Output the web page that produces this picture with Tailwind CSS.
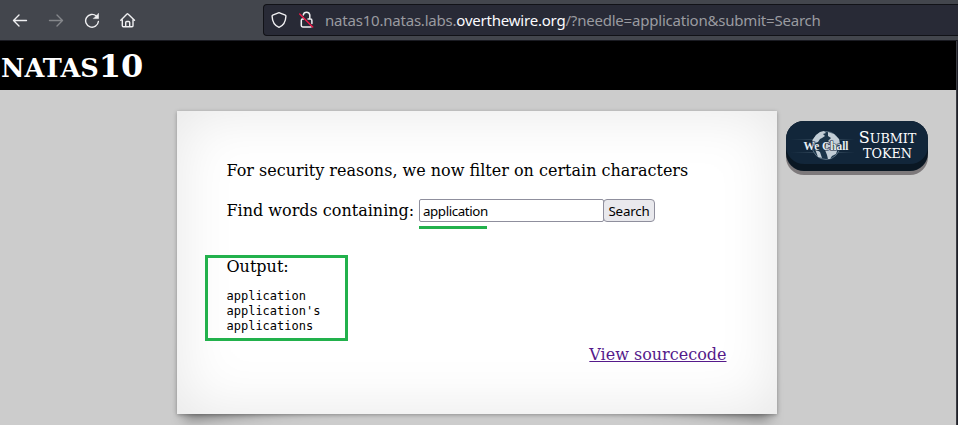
<!DOCTYPE html>
<html lang="en">
<head>
<meta charset="utf-8">
<title>natas10</title>
<script src="https://cdn.jsdelivr.net/npm/@tailwindcss/browser@4"></script>
</head>
<body class="w-[958px] h-[425px] overflow-hidden flex flex-col bg-[#cccccc] font-['DejaVu_Serif',serif] text-base text-black">
  <nav class="h-[41px] shrink-0 flex bg-[#43464d] border-b border-[#1a1b22] text-[#f0f0f2]">
    <div class="w-[263px] shrink-0 flex pt-[12px] pl-[12px] gap-5">
      <svg class="size-4" viewBox="0 0 16 16" fill="none" stroke="currentColor" stroke-width="1.4" stroke-linecap="round" stroke-linejoin="round"><path d="M14.5 8.5H1.5M7 3 1.5 8.5 7 14"/></svg>
      <svg class="size-4 text-[#85878b]" viewBox="0 0 16 16" fill="none" stroke="currentColor" stroke-width="1.4" stroke-linecap="round" stroke-linejoin="round"><path d="M1.5 8.5h13M9 3l5.500 5.500L9 14"/></svg>
      <svg class="size-4" viewBox="0 0 16 16" fill="none" stroke="currentColor" stroke-width="1.4" stroke-linecap="round"><path d="M12.300 4A6.400 6.400 0 1 0 14.400 9.500"/><path d="M14.500 1.700v4.900H9.600z" fill="currentColor" stroke-width=".6" stroke-linejoin="round"/></svg>
      <svg class="size-4" viewBox="0 0 16 16" fill="none" stroke="currentColor" stroke-width="1.4" stroke-linecap="round" stroke-linejoin="round"><path d="M.8 8.200 7 2.100Q7.500 1.600 8 2.100L14.500 8.200M2.300 7.500v6.300q0 1 1 1h8.700q1 0 1-1V7.500M5.700 14.500v-4q0-1 1-1h2q1 0 1 1v4"/></svg>
    </div>
    <div class="grow mt-[4px] h-[32px] flex items-center rounded-l-[4px] border border-r-0 border-[#111217] bg-[#282a36] pl-[7px]">
      <svg class="w-4 h-[18px]" viewBox="0 0 16 18" fill="none" stroke="currentColor" stroke-width="1.4" stroke-linejoin="round"><path d="M8 1.700 14.300 4.200Q15 4.500 14.900 5.200C14.700 10.500 12.500 14.500 8 16.300 3.500 14.500 1.300 10.500 1.100 5.200Q1 4.500 1.700 4.200Z"/></svg>
      <svg class="ml-[12px] w-4 h-[18px]" viewBox="0 0 16 18" fill="none" stroke="currentColor" stroke-width="1.5" stroke-linecap="round" stroke-linejoin="round"><path d="M4.300 4V3.900a3.300 3.300 0 0 1 6.500 0V8M9 8h2.500q1.400 0 1.400 1.400V12.500M4.500 8H3.700Q2.300 8 2.300 9.400V14.600q0 1.400 1.400 1.400h8.300"/><path d="M.7 3 13.700 16" stroke="#f01848" stroke-width="1.400"/></svg>
      <span class="ml-[10px] whitespace-nowrap font-['Noto_Sans',sans-serif] text-[15px] tracking-[-0.21px] leading-5 text-[#9a9ba0]">natas10.natas.labs.<span class="text-[#fbfbfe]">overthewire.org</span>/?needle=application&amp;submit=Search</span>
    </div>
  </nav>
  <div class="flex grow min-h-0">
    <main class="w-[956px] shrink-0 flex flex-col">
      <h1 class="h-[49px] shrink-0 bg-black text-white font-bold text-[32px] leading-[51px] pl-[1px]"><span class="text-[25.6px]">NATAS</span>10</h1>
      <div class="flex items-start pl-[177px] pt-[21px]">
        <section class="relative isolate w-[600px] h-[303px] shrink-0 before:absolute before:-z-10 before:left-[12px] before:bottom-[17px] before:w-[300px] before:h-[55%] before:[transform:skew(-8deg)_rotate(-6deg)] before:shadow-[0_8px_14px_rgba(0,0,0,0.4)] after:absolute after:-z-10 after:right-[12px] after:bottom-[17px] after:w-[300px] after:h-[55%] after:[transform:skew(8deg)_rotate(6deg)] after:shadow-[0_8px_14px_rgba(0,0,0,0.4)] before:content-[''] after:content-['']">
          <div class="relative h-full bg-white pl-[49.5px] pr-[50.5px] pt-[50px] shadow-[0_1px_4px_rgba(0,0,0,0.3),inset_0_0_60px_rgba(0,0,0,0.1)]">
            <p class="h-[38px] leading-[19px]">For security reasons, we now filter on certain characters</p>
            <form class="flex h-[23px]">
              <label class="leading-[23px] w-[191.5px] whitespace-nowrap">Find words containing:</label>
              <input type="text" value="application" class="w-[185px] h-[23px] bg-white border border-[#8f8f9d] rounded-[2px] px-[3px] pt-px ml-px font-['Noto_Sans',sans-serif] text-[13.333px] tracking-[-0.4px]">
              <button type="button" class="w-[52px] h-[23px] -ml-px border border-[#8f8f9d] rounded-[4px] bg-[#e9e9ed] font-['Noto_Sans',sans-serif] text-[13.333px] tracking-[-0.2px] leading-[21px] pt-px">Search</button>
            </form>
            <div class="ml-[192.5px] mt-[4px] w-[68px] h-[3px] bg-[#22b14c]"></div>
            <div class="-ml-[21.5px] mt-[26px] w-[143px] h-[86px] border-3 border-[#22b14c] pl-[18.5px]">
              <div class="leading-[19px] -mt-px">Output:</div>
              <pre class="mt-[13px] font-['DejaVu_Sans_Mono',monospace] text-[12px] leading-[15px]">application
application's
applications</pre>
            </div>
            <div class="mt-[4px] text-right leading-[19px]"><a class="underline text-[#551a8b]">View sourcecode</a></div>
          </div>
        </section>
        <div class="mt-[10px] ml-[9px] w-[142px] h-[50px] rounded-[18px] bg-[#0a1723] shadow-[0_4px_0_#7d797b]">
          <div class="h-[43px] rounded-[18px] bg-[#12263a] flex items-center">
            <svg class="w-[70px] h-[43px]" viewBox="0 0 70 43">
              <defs><linearGradient id="beam"><stop stop-color="#536b7d" stop-opacity="0"/><stop offset=".6" stop-color="#657b8c"/><stop offset="1" stop-color="#536b7d" stop-opacity="0"/></linearGradient></defs>
              <rect x="4" y="18" width="65" height="1" fill="url(#beam)" opacity=".6"/>
              <rect x="4" y="31" width="65" height="1" fill="url(#beam)" opacity=".6"/>
              <circle cx="40" cy="24.500" r="14" fill="#1c354a" stroke="#75899a" stroke-width=".7"/>
              <path d="M26.500 19 30 14 34 11 38 10 40 12 37 13 39 15 36 17 34 18 32 21 29 22 30 25 27 25ZM42 11 48 13 53 18 54 25 51 29 49 25 46 24 42 20 45 17 42 15ZM40 22 46 22 52 27 50 33 46 35 44 38 42 38 41 34 39 29ZM29 28 34 31 36 37 32 36Z" fill="#c2cdd6"/>
              <text x="17.500" y="29" textLength="45" lengthAdjust="spacingAndGlyphs" font-family="Liberation Serif, serif" font-weight="bold" font-size="12.500" fill="#e8eef2" stroke="#12263a" stroke-width="1.200" paint-order="stroke">We Chall</text>
            </svg>
            <div class="w-[61px] ml-[1px] pt-[4px] flex flex-col items-center text-white text-[12.800px] leading-[15px]"><span class="h-[16px] flex items-baseline tracking-[-0.05px]"><span class="text-[16px]">S</span>UBMIT</span><span class="h-[14px]">TOKEN</span></div>
          </div>
        </div>
      </div>
    </main>
    <aside class="w-[2px] shrink-0 bg-[#1f2029] border-l border-[#3b3c42]"></aside>
  </div>
</body>
</html>
